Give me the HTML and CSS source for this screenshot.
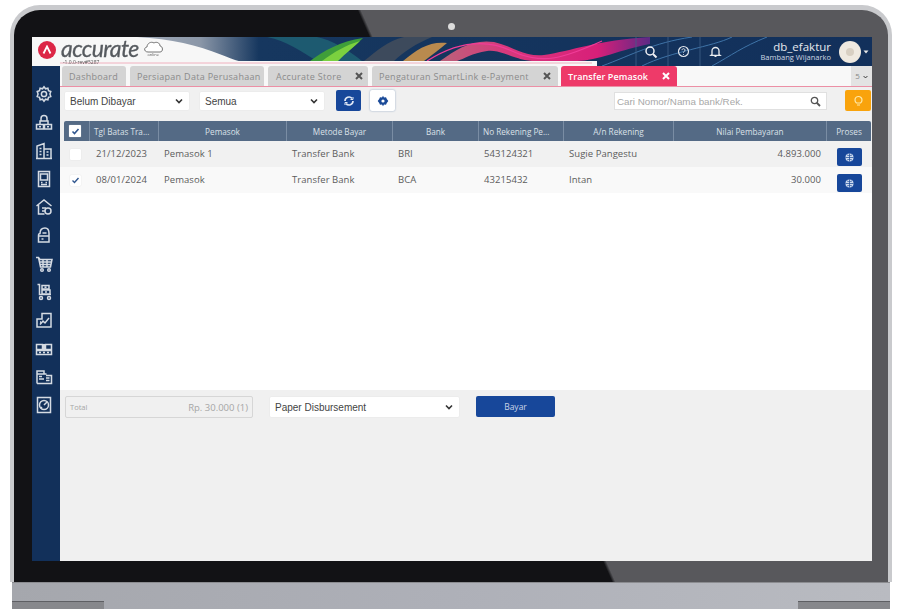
FILE: index.html
```html
<!DOCTYPE html>
<html>
<head>
<title>Transfer Pemasok</title>
<link rel="stylesheet" href="styles.css">
</head>
<body>
<svg class="defs" width="0" height="0">
	<symbol id="chev" viewBox="0 0 8 6"><path d="M1 1.500l3 3 3-3" fill="none" stroke="#333" stroke-width="1.600"/></symbol>
	<symbol id="cross" viewBox="0 0 8 8"><path d="M1 1l6 6M7 1l-6 6" fill="none" stroke="currentColor" stroke-width="2"/></symbol>
	<symbol id="globe" viewBox="0 0 12 12"><circle cx="6" cy="6" r="4.400" fill="#cfdcf0"/><path d="M1.600 6h8.800M6 1.600v8.800M3.200 3.200c2 1 3.600 1 5.600 0M3.200 8.800c2-1 3.600-1 5.600 0" fill="none" stroke="#1a4a98" stroke-width=".8"/></symbol>
</svg>
<div class="laptop">
	<div class="lid">
		<div class="camera-row"><span class="camera"></span></div>
		<div class="screen">
			<!-- top bar -->
			<div class="topbar">
				<svg class="waves" viewBox="0 0 840 29" preserveAspectRatio="none">
					<defs>
						<linearGradient id="gBase" x1="0" x2="1" y1="0" y2="0">
							<stop offset="0" stop-color="#c4c9d2"/><stop offset=".2" stop-color="#8b97a8"/><stop offset=".27" stop-color="#16375f"/><stop offset="1" stop-color="#12305b"/>
						</linearGradient>
						<linearGradient id="gPink" x1="0" x2="1" y1="0" y2="0">
							<stop offset="0" stop-color="#b9627a"/><stop offset=".3" stop-color="#d83a7c"/><stop offset=".75" stop-color="#d81f79"/><stop offset="1" stop-color="#5c2a86"/>
						</linearGradient>
					</defs>
					<rect width="840" height="29" fill="url(#gBase)"/>
					<path d="M0 0H105C140 2 165 8 190 18C200 22 215 28 235 29H0Z" fill="#f7f7f7"/>
					<path d="M235 0C255 4 268 14 285 24H330C318 14 300 3 285 0Z" fill="#1d5a70"/>
					<path d="M278 24C292 14 308 4 331 1C324 8 312 18 302 24Z" fill="#3f9e3a"/>
					<path d="M290 24C302 15 314 8 328 4C322 10 314 16 306 24Z" fill="#7bd03f"/>
					<path d="M332 24C345 14 355 4 372 0H400C385 6 370 16 362 24Z" fill="#3d4a5c"/>
					<path d="M371 24C385 12 398 4 415 6C408 12 400 18 392 24Z" fill="#b98a4e"/>
					<path d="M408 24C425 12 440 2 462 5C480 9 492 20 512 18C540 14 565 3 618 0V7C590 12 565 24 545 24H500C480 22 468 12 455 14C440 16 432 22 425 24Z" fill="url(#gPink)"/>
					<path d="M395 24C420 8 450 0 480 14S530 22 570 4" fill="none" stroke="#f03c98" stroke-width="1.200"/>
					<path d="M570 29C600 18 620 6 660 0M610 29C640 14 680 10 700 0M680 29C700 18 710 10 735 0" fill="none" stroke="#3f74a8" stroke-width="1"/>
					<path d="M604 0V29M636 0V29M668 0V29" stroke="#3f5f88" stroke-width=".8"/>
					<rect x="195" y="24" width="370" height="5" fill="#f7f7f7"/>
					<path d="M28 26H560" stroke="#ef9fb0" stroke-width=".8"/>
				</svg>
				<div class="logo">
					<span class="logo-mark">
						<svg width="10" height="10" viewBox="0 0 10 10"><path d="M1.500 8.500L5 1.500l3.500 7" fill="none" stroke="#fff" stroke-width="1.800"/></svg>
					</span>
					<div class="logo-text">
						<span class="logo-word">accurate</span>
						<span class="logo-rev">-1.0.0-rev#5287</span>
					</div>
					<div class="logo-cloud">
						<svg width="21" height="13" viewBox="0 0 21 13"><path d="M5 12C1 12 .5 7.500 4 7 4 3.500 8 1 11 3c2-1.500 6-.5 6 3 3 0 3.500 6 0 6Z" fill="#fff" stroke="#666" stroke-width=".9"/></svg>
						<span>online</span>
					</div>
				</div>
				<div class="topbar-right">
					<span class="top-icon"><svg width="14" height="14" viewBox="0 0 14 14"><circle cx="6" cy="6" r="4" fill="none" stroke="#f0f0f4" stroke-width="1.500"/><path d="M9 9l3.500 3.500" stroke="#f0f0f4" stroke-width="2"/></svg></span>
					<span class="top-icon"><svg width="13" height="13" viewBox="0 0 13 13"><circle cx="6.500" cy="6.500" r="5" fill="none" stroke="#e4e8ee" stroke-width="1.200"/><path d="M5 5.200c0-2 3-2 3 0 0 1.200-1.500 1.200-1.500 2.400M6.500 9v.8" fill="none" stroke="#e4e8ee" stroke-width="1"/></svg></span>
					<span class="top-icon"><svg width="13" height="13" viewBox="0 0 13 13"><path d="M3 9.500V6a3.500 3.500 0 017 0v3.500l1 .8H2ZM5.500 11.300h2" fill="none" stroke="#e8ecf0" stroke-width="1.300"/></svg></span>
					<div class="user">
						<span class="user-db">db_efaktur</span>
						<span class="user-name">Bambang Wijanarko</span>
					</div>
					<span class="avatar"><span class="avatar-head"></span></span>
					<svg class="avatar-caret" width="6" height="4" viewBox="0 0 6 4"><path d="M.5.500h5L3 3.500Z" fill="#e8e8e8"/></svg>
				</div>
			</div>
			<div class="workspace">
				<!-- sidebar -->
				<div class="sidebar">
					<svg viewBox="0 0 18 18"><circle cx="9" cy="9" r="2.600"/><path d="M9 1.800l1.500 2 2.400-.6.600 2.400 2.300.9-.9 2.500.9 2.500-2.300.9-.6 2.400-2.400-.6-1.500 2-1.500-2-2.400.6-.6-2.400-2.300-.9.9-2.500-.9-2.500 2.300-.9.600-2.400 2.400.6Z"/></svg>
					<svg viewBox="0 0 18 18"><path d="M6 8V5.500a3 3 0 016 0V8M5 8h8v3.500H5ZM1.500 11.500h7v4.500h-7ZM9.500 11.500h7v4.500h-7ZM4 13.700h2M12 13.700h2"/></svg>
					<svg viewBox="0 0 18 18"><path d="M2 16.500V4l7-2.500v15ZM9 7h7v9.500H9ZM4.500 6.500h2M4.500 9.500h2M4.500 12.500h2M11.500 10h2M11.500 13h2M1 16.500h16"/></svg>
					<svg viewBox="0 0 18 18"><path d="M3.500 1.500h11v15h-11ZM5.500 4h7v6h-7ZM6 12.500h1.500M10.500 12.500H12M6 14.500h6"/></svg>
					<svg viewBox="0 0 18 18"><path d="M1.500 8L9 2l7.500 6M3.500 7v9h6M7 10h4M7 13h3"/><circle cx="13" cy="13" r="3"/></svg>
					<svg viewBox="0 0 18 18"><path d="M5 7.500C5 4 7 2 10 2s4 2.500 4 5.500v8.500H3.500V9.500Q3.500 7.500 5 7.500ZM3.500 10H14M7.500 7h4M6.500 13h2"/></svg>
					<svg viewBox="0 0 18 18"><path d="M1 2.500h2.500l1.500 2h12l-1.500 7.500H5.500L3.500 2.500M5 7h11M5.500 9.500h10M8 4.500V12M12 4.500V12"/><circle cx="7" cy="15" r="1.300"/><circle cx="14" cy="15" r="1.300"/></svg>
					<svg viewBox="0 0 18 18"><path d="M2.500 1.500h2v10h11.500M7 2.500h7v3.500H7ZM7 7h8v4H7ZM9.500 4.200h2M10 9h2"/><circle cx="6" cy="15" r="1.500"/><circle cx="14" cy="15" r="1.500"/></svg>
					<svg viewBox="0 0 18 18"><path d="M2 8h5V2.500h9V16H2ZM5 13.500l3-3.500 2 2 4-5M5 11h1"/></svg>
					<svg viewBox="0 0 18 18"><path d="M1.500 4.500h6v5h-6ZM10.500 4.500h6v5h-6ZM1.500 10.500h15v4h-15ZM4 12.500h2M8 12.500h2M12 12.500h2M9 4v6"/></svg>
					<svg viewBox="0 0 18 18"><path d="M2 15.500V3h7v3H2M9 6h2.500M11 7.500h5.500v8H2M4 8.500h3M4 11h5M11 10h3.500M11 12.500h3.500"/></svg>
					<svg viewBox="0 0 18 18"><path d="M2.500 1.500h13v15h-13Z"/><circle cx="9" cy="9" r="4.500"/><path d="M9 9l3-3M6 12l1-1"/></svg>
				</div>
				<div class="main">
					<!-- tabs -->
					<div class="tabs">
						<div class="tab tab-dash">Dashboard</div>
						<div class="tab tab-data">Persiapan Data Perusahaan</div>
						<div class="tab tab-store">Accurate Store <svg class="tab-x"><use href="#cross"/></svg></div>
						<div class="tab tab-smart">Pengaturan SmartLink e-Payment <svg class="tab-x"><use href="#cross"/></svg></div>
						<div class="tab tab-active">Transfer Pemasok <svg class="tab-x"><use href="#cross"/></svg></div>
						<div class="tab-count">5 <svg width="5" height="4"><use href="#chev"/></svg></div>
					</div>
					<!-- toolbar -->
					<div class="toolbar">
						<div class="select select-status">Belum Dibayar <svg width="8" height="6"><use href="#chev"/></svg></div>
						<div class="select select-type">Semua <svg width="8" height="6"><use href="#chev"/></svg></div>
						<button class="btn btn-blue"><svg width="12" height="12" viewBox="0 0 12 12"><path d="M10 6a4 4 0 01-7 2.600M2 6a4 4 0 017-2.600" fill="none" stroke="#dfe7f5" stroke-width="1.700"/><path d="M10 2v2.500H7.500M2 10V7.500h2.500" fill="none" stroke="#dfe7f5" stroke-width="1"/></svg></button>
						<button class="btn btn-white"><svg width="12" height="12" viewBox="0 0 12 12"><path d="M6 .8l1 1.700 2-.2.800 1.800 1.500 1.900-1.500 1.900-.8 1.800-2-.2-1 1.700-1-1.700-2 .2-.8-1.800L.7 6l1.500-1.900.8-1.800 2 .2Z" fill="#1a4a98"/><circle cx="6" cy="6" r="1.600" fill="#fff"/></svg></button>
						<div class="search">
							<span>Cari Nomor/Nama bank/Rek.</span>
							<svg width="11" height="11" viewBox="0 0 11 11"><circle cx="4.500" cy="4.500" r="3.200" fill="none" stroke="#555" stroke-width="1.300"/><path d="M7 7l3 3" stroke="#555" stroke-width="1.800"/></svg>
						</div>
						<button class="btn btn-orange"><svg width="11" height="12" viewBox="0 0 11 12"><path d="M3.500 8C2 6.800 2 5.800 2 5a3.500 3.500 0 017 0c0 .8 0 1.800-1.500 3ZM4 10h3" fill="none" stroke="#ffe9a8" stroke-width="1.200"/></svg></button>
					</div>
					<!-- table -->
					<div class="grid grid-head">
						<div class="cell-check"><span class="check check-head"><svg width="9" height="9" viewBox="0 0 9 9"><path d="M1.500 4.500l2 2 4-4.500" fill="none" stroke="#31578f" stroke-width="1.600"/></svg></span></div>
						<div class="th th-left">Tgl Batas Tra...</div>
						<div class="th">Pemasok</div>
						<div class="th">Metode Bayar</div>
						<div class="th">Bank</div>
						<div class="th th-left">No Rekening Pe...</div>
						<div class="th">A/n Rekening</div>
						<div class="th">Nilai Pembayaran</div>
						<div class="th">Proses</div>
					</div>
					<div class="rows">
						<div class="grid row row-odd">
							<div class="cell-check"><span class="check"></span></div>
							<div class="td">21/12/2023</div>
							<div class="td">Pemasok 1</div>
							<div class="td">Transfer Bank</div>
							<div class="td">BRI</div>
							<div class="td">543124321</div>
							<div class="td">Sugie Pangestu</div>
							<div class="td td-num">4.893.000</div>
							<div class="td-btn"><button class="btn-row"><svg width="11" height="11"><use href="#globe"/></svg></button></div>
						</div>
						<div class="grid row row-even">
							<div class="cell-check"><span class="check"><svg width="9" height="9" viewBox="0 0 9 9"><path d="M1.500 4.500l2 2 4-4.500" fill="none" stroke="#31578f" stroke-width="1.400"/></svg></span></div>
							<div class="td">08/01/2024</div>
							<div class="td">Pemasok</div>
							<div class="td">Transfer Bank</div>
							<div class="td">BCA</div>
							<div class="td">43215432</div>
							<div class="td">Intan</div>
							<div class="td td-num">30.000</div>
							<div class="td-btn"><button class="btn-row"><svg width="11" height="11"><use href="#globe"/></svg></button></div>
						</div>
					</div>
					<!-- footer -->
					<div class="footer">
						<div class="total"><span class="total-label">Total</span><span>Rp. 30.000 (1)</span></div>
						<div class="select select-pay">Paper Disbursement <svg width="8" height="6"><use href="#chev"/></svg></div>
						<button class="btn-pay">Bayar</button>
					</div>
				</div>
			</div>
		</div>
		<div class="chin"></div>
	</div>
	<div class="base">
		<span class="foot"></span>
		<span class="foot"></span>
	</div>
</div>
</body>
</html>
```

FILE: styles.css
```css
html, body {
	margin: 0;
	height: 609px;
	overflow: hidden;
	background: #fff;
	font-family: "Open Sans", sans-serif;
}
.defs { display: block; height: 0; }

.laptop {
	margin: 5px 14px 0 10px;
	height: 604px;
	display: flex;
	flex-direction: column;
	filter: blur(0.6px);
}
.lid {
	height: 572px;
	padding: 0 17px 0 18px;
	border: solid #c9cacd;
	border-width: 5px 4px 0 4px;
	border-radius: 30px 30px 0 0;
	background: linear-gradient(66deg, #121215 53%, #58585c 53.3%);
	display: flex;
	flex-direction: column;
}
.camera-row {
	height: 27px;
	box-sizing: border-box;
	padding-top: 5px;
	display: flex;
	justify-content: center;
	align-items: center;
}
.camera {
	width: 7px;
	height: 7px;
	border-radius: 50%;
	background: #dcdcdc;
}
.chin { height: 21px; }
.base {
	flex: 1;
	margin: 0 2px 0 2px;
	background: linear-gradient(90deg, #a5a7ad, #aeb0b8 50%, #b9bbc1);
	border-top: 1px solid #8b8c90;
	border-radius: 0 0 8px 8px;
	display: flex;
	justify-content: space-between;
	align-items: flex-end;
}
.foot {
	width: 92px;
	height: 7px;
	background: #87888c;
	border-top: 1px solid #5e5f63;
}

.screen {
	width: 840px;
	height: 524px;
	display: flex;
	flex-direction: column;
}

/* top bar */
.topbar {
	position: relative;
	height: 29px;
	display: flex;
	justify-content: space-between;
	align-items: center;
}
.waves {
	position: absolute;
	left: 0;
	top: 0;
	width: 840px;
	height: 29px;
}
.logo {
	position: relative;
	display: flex;
	align-items: flex-start;
	padding-left: 6px;
	height: 29px;
}
.logo-mark {
	width: 18px;
	height: 18px;
	margin-top: 4px;
	border-radius: 50%;
	background: #dc2646;
	display: flex;
	align-items: center;
	justify-content: center;
}
.logo-text {
	margin-left: 5px;
	display: flex;
	flex-direction: column;
}
.logo-word {
	font-family: Lato, sans-serif;
	font-style: italic;
	font-size: 23px;
	line-height: 22px;
	color: #565a5f;
	letter-spacing: -0.6px;
	-webkit-text-stroke: 0.3px #565a5f;
}
.logo-rev {
	font-size: 5px;
	line-height: 6px;
	color: #555;
	padding-left: 2px;
}
.logo-cloud {
	margin: 3px 0 0 4px;
	display: flex;
	flex-direction: column;
	align-items: center;
}
.logo-cloud span {
	font-size: 4px;
	line-height: 3px;
	color: #555;
}
.topbar-right {
	position: relative;
	display: flex;
	align-items: center;
	height: 29px;
}
.top-icon {
	width: 32px;
	display: flex;
	justify-content: center;
}
.user {
	width: 100px;
	margin-right: 8px;
	display: flex;
	flex-direction: column;
	align-items: flex-end;
}
.user-db {
	font-size: 11.500px;
	line-height: 12px;
	color: #e6e9ee;
}
.user-name {
	font-size: 7.500px;
	line-height: 9px;
	color: #cdd6e2;
}
.avatar {
	width: 22px;
	height: 22px;
	border-radius: 50%;
	background: #efe9e0;
	display: flex;
	justify-content: center;
	align-items: center;
}
.avatar-head {
	width: 8px;
	height: 8px;
	border-radius: 50%;
	background: #d8cfc2;
}
.avatar-caret { margin: 0 3px 0 2px; }

/* sidebar + main */
.workspace {
	flex: 1;
	display: flex;
	min-height: 0;
}
.sidebar {
	width: 28px;
	padding-top: 19px;
	background: #12305a;
	display: flex;
	flex-direction: column;
	align-items: center;
	gap: 10.300px;
}
.sidebar svg {
	width: 18px;
	height: 18px;
	fill: none;
	stroke: #d5dbe3;
	stroke-width: 1.500;
	margin-left: -4px;
}
.main {
	flex: 1;
	display: flex;
	flex-direction: column;
	background: #f0f0f0;
	min-width: 0;
}

/* tabs */
.tabs {
	height: 20px;
	display: flex;
	padding-left: 2px;
	gap: 4px;
	background: #f8f8f8;
	border-bottom: 1px solid #ec8fa5;
	font-size: 9px;
	letter-spacing: 0.3px;
}
.tab {
	display: flex;
	align-items: center;
	justify-content: space-between;
	padding: 0 7px;
	background: #d4d4d4;
	color: #8b8b8b;
	border-radius: 3px 3px 0 0;
	white-space: nowrap;
	box-sizing: border-box;
}
.tab-dash { width: 64px; }
.tab-data { width: 134px; }
.tab-store { width: 100px; padding: 0 5px 0 8px; }
.tab-smart { width: 186px; }
.tab-active {
	width: 116px;
	margin-left: -1px;
	background: #ee3a69;
	color: #fff;
	font-weight: 600;
	letter-spacing: 0.1px;
}
.tab-x {
	width: 8px;
	height: 8px;
	color: #555;
}
.tab-active .tab-x { color: #fff; }
.tab-count {
	margin-left: auto;
	width: 21px;
	background: #e3e3e3;
	color: #888;
	font-size: 8px;
	text-align: center;
	line-height: 20px;
}

/* toolbar */
.toolbar {
	height: 34px;
	box-sizing: border-box;
	padding: 3px 1px 0 5px;
	display: flex;
	align-items: flex-start;
}
.select {
	height: 18px;
	margin-top: 2px;
	box-sizing: border-box;
	padding: 0 6px 0 5px;
	background: #fff;
	border-radius: 1px;
	box-shadow: 0 0 1px #ccc;
	font-family: "Liberation Sans", sans-serif;
	font-size: 10px;
	color: #444;
	display: flex;
	align-items: center;
	justify-content: space-between;
}
.select-status { width: 124px; }
.select-type { width: 124px; margin-left: 11px; }
.btn {
	width: 25px;
	height: 21px;
	padding: 0;
	border: 0;
	border-radius: 2px;
	display: flex;
	align-items: center;
	justify-content: center;
}
.btn-blue { margin-left: 12px; background: #17479a; }
.btn-white { margin-left: 9px; background: #fff; box-shadow: 0 0 2px #8aa0bf; }
.search {
	width: 213px;
	height: 18px;
	margin: 2px 0 0 219px;
	box-sizing: border-box;
	padding: 0 5px 0 2px;
	background: #fff;
	border: 1px solid #e0e0e0;
	display: flex;
	align-items: center;
	justify-content: space-between;
	font-family: "Liberation Sans", sans-serif;
	font-size: 9.800px;
	color: #a8a8a8;
}
.btn-orange { margin-left: 18px; width: 26px; background: #f9a30c; }

/* table */
.grid {
	display: grid;
	grid-template-columns: 25px 69px 128px 106px 86px 85px 110px 153px 45px;
	margin: 0 1px 0 4px;
}
.grid-head {
	height: 20px;
	background: #546a85;
	border-radius: 2px 2px 0 0;
	font-size: 8.200px;
	color: #dbe1e8;
}
.th {
	display: flex;
	align-items: center;
	justify-content: center;
	border-left: 1px solid #7a8da4;
	white-space: nowrap;
}
.th-left {
	justify-content: flex-start;
	padding-left: 4px;
}
.cell-check {
	display: flex;
	align-items: center;
	justify-content: center;
	padding-right: 3px;
}
.check {
	width: 11px;
	height: 11px;
	background: #fff;
	border-radius: 1px;
	box-shadow: 0 0 1px #ccc;
	display: flex;
	align-items: center;
	justify-content: center;
}
.check-head { width: 12px; height: 12px; }
.rows {
	flex: 1;
	background: #fff;
}
.rows .grid { margin: 0; padding: 0 1px 0 4px; }
.row {
	height: 26px;
	font-size: 9.500px;
	letter-spacing: 0.05px;
	color: #5c5c5c;
}
.row-odd { background: #f1f1f1; }
.row-even { background: #f9f9f9; }
.td {
	padding: 0 0 1px 6px;
	display: flex;
	align-items: center;
	white-space: nowrap;
}
.td:nth-child(2) { padding-left: 7px; }
.td-num {
	justify-content: flex-end;
	padding-right: 5px;
}
.td-btn {
	display: flex;
	justify-content: center;
	padding: 7px 0 0 2px;
}
.btn-row {
	width: 25px;
	height: 18px;
	padding: 0;
	border: 0;
	border-radius: 2px;
	background: #17479a;
	display: flex;
	align-items: center;
	justify-content: center;
}

/* footer */
.footer {
	height: 171px;
	box-sizing: border-box;
	padding: 6px 0 0 5px;
	display: flex;
	align-items: flex-start;
	background: #f0f0f0;
}
.total {
	width: 188px;
	height: 22px;
	box-sizing: border-box;
	padding: 0 4px;
	border: 1px solid #d6d6d6;
	border-radius: 2px;
	display: flex;
	align-items: center;
	justify-content: space-between;
	font-size: 9.500px;
	color: #a6a6a6;
}
.total-label { font-size: 7.500px; }
.select-pay {
	width: 189px;
	height: 20px;
	margin: 1px 0 0 17px;
}
.btn-pay {
	width: 79px;
	height: 21px;
	margin-left: 17px;
	border: 0;
	border-radius: 2px;
	background: #17479a;
	color: #c9d4e6;
	font-family: "Open Sans", sans-serif;
	font-size: 8.500px;
}
```
